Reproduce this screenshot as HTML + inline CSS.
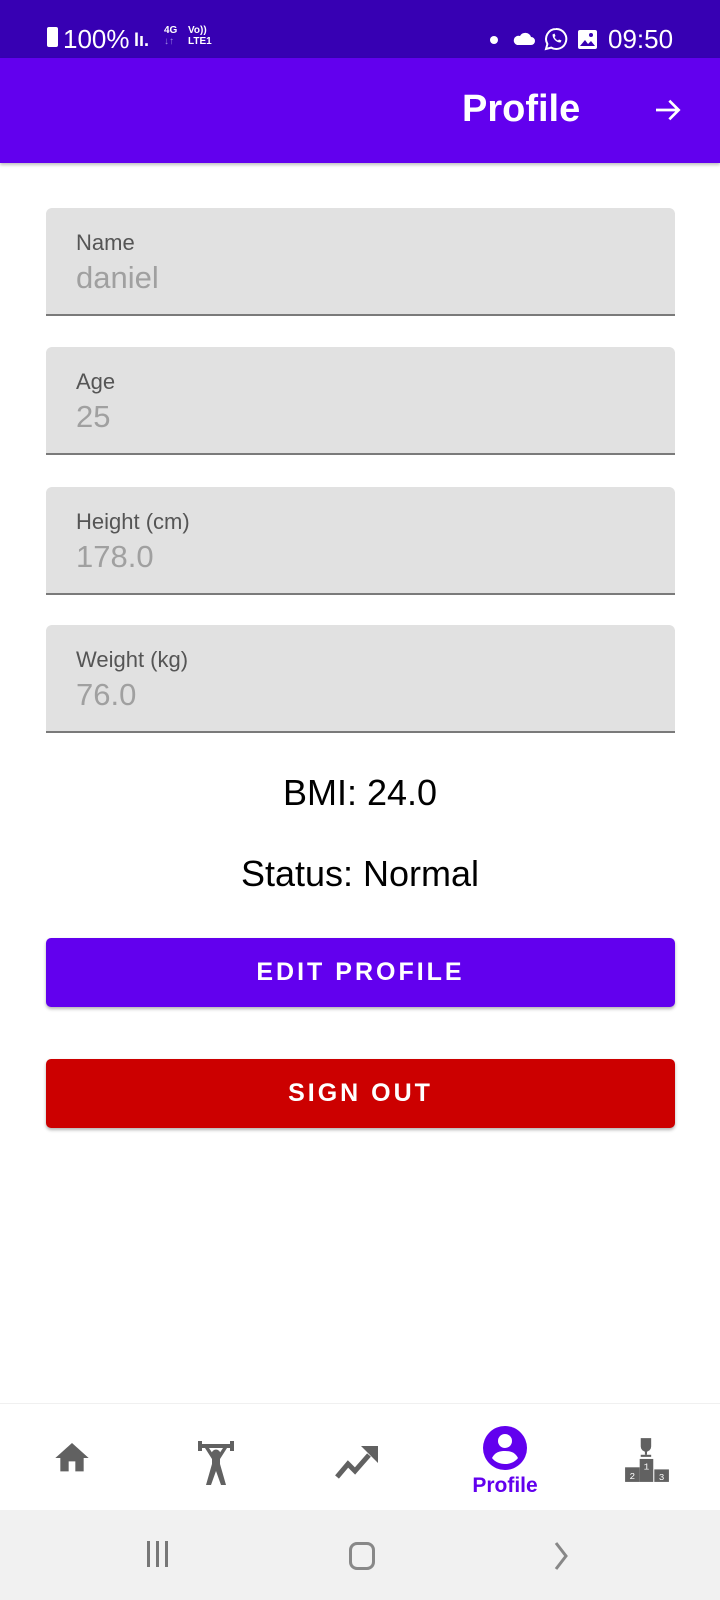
<!DOCTYPE html>
<html><head><meta charset="utf-8">
<style>
*{margin:0;padding:0;box-sizing:border-box}
body{width:720px;height:1600px;position:relative;background:#fff;font-family:"Liberation Sans",sans-serif;overflow:hidden}
.sb{position:absolute;left:0;top:0;width:720px;height:58px;background:#3700b3;color:#fff}
.tb{position:absolute;left:0;top:58px;width:720px;height:105px;background:#6200ee;box-shadow:0 2px 3px rgba(0,0,0,.25)}
.field{position:absolute;left:46px;width:629px;height:108px;background:#e1e1e1;border-radius:6px 6px 0 0;border-bottom:2px solid #7a7a7a}
.field .l{position:absolute;left:30px;top:22px;font-size:22px;color:#555}
.field .v{position:absolute;left:30px;top:52px;font-size:31px;color:#a0a0a0}
.c{position:absolute;left:0;width:720px;text-align:center;color:#000;font-size:36px}
.btn{position:absolute;left:46px;width:629px;height:69px;border-radius:5px;color:#fff;font-weight:bold;font-size:25px;letter-spacing:3px;text-align:center;line-height:69px;box-shadow:0 2px 3px rgba(0,0,0,.3)}
.nav{position:absolute;left:0;top:1403px;width:720px;height:107px;background:#fff;border-top:1px solid #f0f0f0}
.sys{position:absolute;left:0;top:1510px;width:720px;height:90px;background:#f1f1f1}
</style></head><body>
<div class="sb">
 <div style="position:absolute;left:47px;top:27px;width:11px;height:20px;background:#fff;border-radius:2px"></div>
 <div style="position:absolute;left:63px;top:24px;font-size:26px">100%</div>
 <div style="position:absolute;left:134px;top:30px;font-size:18px;font-weight:bold">lı.</div>
 <div style="position:absolute;left:164px;top:25px;font-size:10px;line-height:11px;font-weight:bold">4G<br><span style="color:#9d88e0">↓↑</span></div>
 <div style="position:absolute;left:188px;top:25px;font-size:10px;line-height:11px;font-weight:bold">Vo))<br>LTE1</div>
 <div style="position:absolute;left:490px;top:36px;width:8px;height:8px;border-radius:50%;background:#fff"></div>
 <svg style="position:absolute;left:512px;top:30px" width="24" height="16" viewBox="0 0 24 16"><path d="M5 15h14a4 4 0 0 0 0-8 6 6 0 0 0-11-1 4.5 4.5 0 0 0-3 9z" fill="#fff"/></svg>
 <svg style="position:absolute;left:544px;top:27px" width="24" height="24" viewBox="0 0 24 24"><path d="M12 2a10 10 0 0 0-8.6 15L2 22l5.2-1.4A10 10 0 1 0 12 2z" fill="none" stroke="#fff" stroke-width="2"/><path d="M8.5 7.5c0 4 3.5 8 8 8l1-2-2.5-1-1 1c-1.5-.5-3-2-3.5-3.5l1-1-1-2.5z" fill="#fff"/></svg>
 <svg style="position:absolute;left:577px;top:29px" width="21" height="21" viewBox="0 0 21 21"><rect x="1" y="1" width="19" height="19" rx="2" fill="#fff"/><path d="M3 17l5-6 3 4 3-3 4 5z" fill="#3700b3"/><circle cx="14" cy="6" r="2" fill="#3700b3"/></svg>
 <div style="position:absolute;left:608px;top:24px;font-size:26px">09:50</div>
</div>
<div class="tb">
 <div style="position:absolute;left:462px;top:30px;font-size:38px;font-weight:bold;color:#fff">Profile</div>
 <svg style="position:absolute;left:652px;top:36px" width="32" height="32" viewBox="0 0 24 24"><path d="M3 12h17M13 5l7 7-7 7" fill="none" stroke="#fff" stroke-width="2"/></svg>
</div>

<div class="field" style="top:208px"><div class="l">Name</div><div class="v">daniel</div></div>
<div class="field" style="top:347px"><div class="l">Age</div><div class="v">25</div></div>
<div class="field" style="top:487px"><div class="l">Height (cm)</div><div class="v">178.0</div></div>
<div class="field" style="top:625px"><div class="l">Weight (kg)</div><div class="v">76.0</div></div>

<div class="c" style="top:772px">BMI: 24.0</div>
<div class="c" style="top:853px">Status: Normal</div>
<div class="btn" style="top:938px;background:#6200ee">EDIT PROFILE</div>
<div class="btn" style="top:1059px;background:#cc0000">SIGN OUT</div>

<div class="nav">
 <svg style="position:absolute;left:52px;top:34px" width="40" height="40" viewBox="0 0 24 24"><path d="M10 20v-6h4v6h5v-8h3L12 3 2 12h3v8z" fill="#616161"/></svg>
 <svg style="position:absolute;left:197px;top:36px" width="38" height="48" viewBox="0 0 38 48" fill="#616161"><rect x="1" y="1" width="4" height="10"/><rect x="33" y="1" width="4" height="10"/><rect x="4" y="4" width="30" height="4"/><circle cx="19" cy="14" r="4.5"/><path d="M8 8l7 11v5l-6 21h5l5-14 5 14h5l-6-21v-5l7-11h-4l-6 9h-2l-6-9z"/></svg>
 <svg style="position:absolute;left:334px;top:38px" width="46" height="40" viewBox="0 0 46 40"><path d="M3 35l11-13 7 7 14-16" fill="none" stroke="#616161" stroke-width="5"/><path d="M27 4h17v17z" fill="#616161"/></svg>
 <svg style="position:absolute;left:481px;top:20px" width="48" height="48" viewBox="0 0 48 48"><ellipse cx="24" cy="24" rx="22" ry="22" fill="#6200ee"/><circle cx="24" cy="17" r="7" fill="#fff"/><path d="M11 34c3-6 8-7 13-7s10 1 13 7c-3 4-8 6-13 6s-10-2-13-6z" fill="#fff"/></svg>
 <div style="position:absolute;left:465px;top:70px;width:80px;text-align:center;font-size:21px;font-weight:bold;color:#6200ee">Profile</div>
 <svg style="position:absolute;left:624px;top:32px" width="46" height="48" viewBox="0 0 44 46" fill="#616161"><path d="M16 2h10v8a5 5 0 0 1-10 0z"/><rect x="20" y="14" width="2" height="4"/><rect x="16" y="18" width="10" height="2"/><rect x="15" y="22" width="13" height="22"/><rect x="1" y="30" width="14" height="14"/><rect x="29" y="32" width="14" height="12"/><text x="8" y="41" font-size="9" fill="#fff" text-anchor="middle" font-family="Liberation Mono">2</text><text x="21.5" y="32" font-size="9" fill="#fff" text-anchor="middle" font-family="Liberation Mono">1</text><text x="36" y="42" font-size="9" fill="#fff" text-anchor="middle" font-family="Liberation Mono">3</text></svg>
</div>
<div class="sys">
 <div style="position:absolute;left:147px;top:31px;width:3px;height:26px;background:#777"></div>
 <div style="position:absolute;left:156px;top:31px;width:3px;height:26px;background:#777"></div>
 <div style="position:absolute;left:165px;top:31px;width:3px;height:26px;background:#777"></div>
 <div style="position:absolute;left:349px;top:32px;width:26px;height:28px;border:3px solid #888;border-radius:8px"></div>
 <svg style="position:absolute;left:552px;top:30px" width="20" height="32" viewBox="0 0 20 32"><path d="M4 3l10 13-10 13" fill="none" stroke="#888" stroke-width="3"/></svg>
</div>
</body></html>
